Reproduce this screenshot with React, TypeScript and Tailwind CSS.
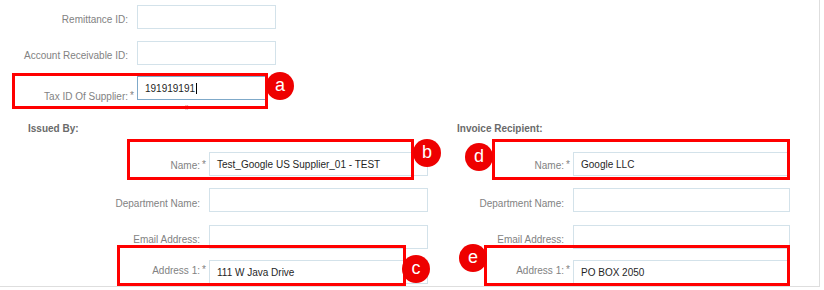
import React from "react";

type FieldProps = {
  label: string;
  labelW: number;
  inputW: number;
  value?: string;
  required?: boolean;
  focused?: boolean;
  labelPt: string;
  className?: string;
};

const Field: React.FC<FieldProps> = ({
  label,
  labelW,
  inputW,
  value,
  required,
  focused,
  labelPt,
  className,
}) => (
  <div className={`flex items-start ${className ?? ""}`}>
    <div
      className={`shrink-0 text-right text-[10px] leading-[12px] text-[#828282] ${labelPt}`}
      style={{ width: labelW }}
    >
      {label}
    </div>
    <div className={`w-[9px] shrink-0 pl-[2px] text-[10px] leading-[10px] text-[#828282] ${labelPt}`}>
      {required ? "*" : ""}
    </div>
    <div
      className={`relative flex h-[24px] shrink-0 items-center border bg-white pl-[7px] text-[10px] text-[#1f1f1f] ${
        focused ? "border-[#7fa9c9]" : "border-[#d3e2ea]"
      }`}
      style={{ width: inputW }}
    >
      {value}
      {focused && <span className="ml-[1px] inline-block h-[11px] w-px bg-black" />}
      {focused && (
        <span className="absolute left-[47px] top-[27px] text-[7px] leading-[7px] text-[#e57373]">‼</span>
      )}
    </div>
  </div>
);

const Badge: React.FC<{ letter: string; className: string }> = ({ letter, className }) => (
  <div
    className={`absolute flex h-[28px] w-[28px] items-center justify-center rounded-full bg-[#ee0000] pb-[2px] text-[18px] text-white ${className}`}
  >
    {letter}
  </div>
);

const App: React.FC = () => {
  return (
    <div
      className="relative h-[287px] w-[820px] overflow-hidden border-r border-b border-[#dedede] bg-white"
      style={{ fontFamily: '"Liberation Sans", Arial, sans-serif' }}
    >
      {/* top fields */}
      <div className="flex flex-col pt-[5px]">
        <Field label="Remittance ID:" labelW={128} inputW={139} labelPt="pt-[9px]" />
        <Field label="Account Receivable ID:" labelW={128} inputW={139} labelPt="pt-[9px]" className="mt-[12px]" />
        <Field
          label="Tax ID Of Supplier:"
          labelW={128}
          inputW={130}
          value="191919191"
          required
          focused
          labelPt="pt-[15px]"
          className="mt-[11px]"
        />
      </div>

      {/* section headers */}
      <div className="mt-[20px] flex text-[10px] font-bold leading-[12px] text-[#6a6a6a]">
        <div className="w-[457px] pl-[28px]">Issued By:</div>
        <div>Invoice Recipient:</div>
      </div>

      {/* two columns */}
      <div className="mt-[17px] flex">
        <div className="flex w-[457px] flex-col">
          <Field label="Name:" labelW={200} inputW={219} value="Test_Google US Supplier_01 - TEST" required labelPt="pt-[8px]" />
          <Field label="Department Name:" labelW={200} inputW={219} labelPt="pt-[10px]" className="mt-[12px]" />
          <Field label="Email Address:" labelW={200} inputW={219} labelPt="pt-[9px]" className="mt-[13px]" />
          <Field label="Address 1:" labelW={200} inputW={219} value="111 W Java Drive" required labelPt="pt-[5px]" className="mt-[11px]" />
        </div>
        <div className="flex flex-col">
          <Field label="Name:" labelW={107} inputW={217} value="Google LLC" required labelPt="pt-[8px]" />
          <Field label="Department Name:" labelW={107} inputW={217} labelPt="pt-[10px]" className="mt-[12px]" />
          <Field label="Email Address:" labelW={107} inputW={217} labelPt="pt-[9px]" className="mt-[13px]" />
          <Field label="Address 1:" labelW={107} inputW={217} value="PO BOX 2050" required labelPt="pt-[5px]" className="mt-[11px]" />
        </div>
      </div>

      {/* annotation overlays */}
      <div className="absolute left-[12px] top-[73px] h-[36px] w-[256px] border-[3px] border-[#ff0000]" />
      <Badge letter="a" className="left-[266px] top-[72px]" />

      <div className="absolute left-[127px] top-[139px] h-[41px] w-[287px] border-[3px] border-[#ff0000]" />
      <Badge letter="b" className="left-[413px] top-[139px]" />

      <div className="absolute left-[117px] top-[245px] h-[41px] w-[289px] border-[3px] border-[#ff0000]" />
      <Badge letter="c" className="left-[402px] top-[255px]" />

      <div className="absolute left-[492px] top-[139px] h-[41px] w-[298px] border-[3px] border-[#ff0000]" />
      <Badge letter="d" className="left-[465px] top-[143px]" />

      <div className="absolute left-[484px] top-[245px] h-[41px] w-[306px] border-[3px] border-[#ff0000]" />
      <Badge letter="e" className="left-[459px] top-[244px]" />
    </div>
  );
};

export default App;
